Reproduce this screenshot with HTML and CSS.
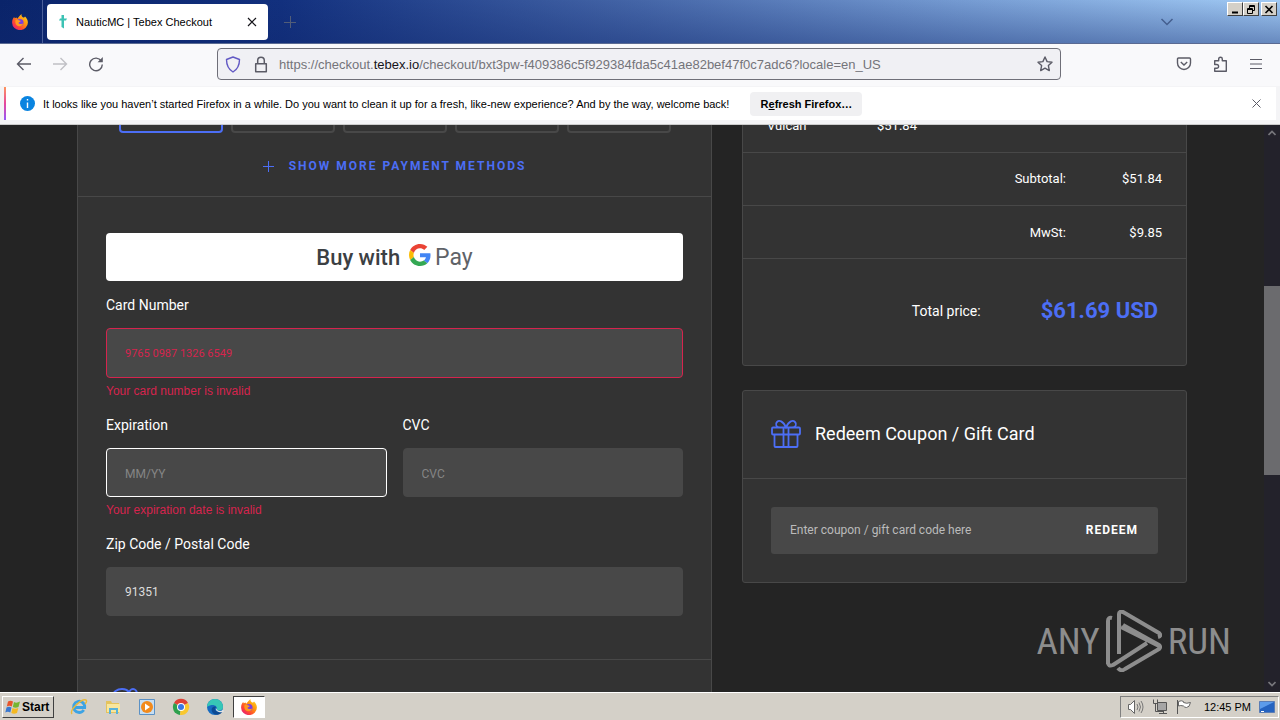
FILE: index.html
```html
<!DOCTYPE html>
<html lang="en">
<head>
  <meta charset="UTF-8">
  <meta name="viewport" content="width=device-width, initial-scale=1.0">
  <title>NauticMC | Tebex Checkout</title>
  <link rel="stylesheet" href="styles.css">
</head>
<body>
  <!-- Shared firefox logo, used in the tab strip and the taskbar -->
  <svg class="defs" aria-hidden="true">
    <defs>
      <linearGradient id="fox-body" x1="1" y1="0" x2="0.1" y2="1">
        <stop offset="0" stop-color="#ffe226"/>
        <stop offset="0.4" stop-color="#ff980e"/>
        <stop offset="0.7" stop-color="#ff4a30"/>
        <stop offset="1" stop-color="#e31587"/>
      </linearGradient>
      <symbol id="firefox" viewBox="0 0 16 16">
        <path fill="url(#fox-body)" d="M9.8 0c-.7 1.400-.2 2.300 1 3.300 1 .4 1.400.2 1.600 0l.6-.8c1.700 1.500 2.900 3.600 2.900 6a7.900 7.500 0 0 1-15.800.2C.1 6 1 4.300 2.200 3l.5 1.300L4.500 3.400l.8 1.300c1.300-1.500 2.500-3.500 4.500-4.700z"/>
        <circle cx="8" cy="8.600" r="3.500" fill="#7a3fe0"/>
        <path fill="#ff9a1f" d="M3.500 6.200c1-.9 2.400-.8 3.600.2 1 .2 1.700.2 1.800.7-.5 1-1.900 1-2.400 1.900.8 1.500 2.900 1.300 4.600.5-.6 2-2.400 3-4.300 2.700-2.600-.4-4-3-3.300-6z"/>
      </symbol>
    </defs>
  </svg>

  <header class="browser">
    <div class="tab-strip">
      <div class="pinned"><svg width="16" height="16"><use href="#firefox"/></svg></div>
      <div class="tab">
        <svg width="8" height="14" viewBox="0 0 8 14"><path d="M2.500 0l2.500-.0v3.500h3l-1 2H5v8l-2.500-1.500v-6.500H0l1-2h1.500z" fill="#3cc2b4"/></svg>
        <span>NauticMC | Tebex Checkout</span>
        <button class="icon-btn" aria-label="Close tab">
          <svg width="10" height="10" viewBox="0 0 10 10"><path d="M1 1l8 8M9 1l-8 8" stroke="#15141a" stroke-width="1.200" fill="none"/></svg>
        </button>
      </div>
      <button class="icon-btn" aria-label="New tab">
        <svg width="12" height="12" viewBox="0 0 12 12"><path d="M6.500 0v12M0 6.500h12" stroke="#525d78" fill="none"/></svg>
      </button>
      <button class="icon-btn list-tabs" aria-label="List all tabs">
        <svg width="14" height="8" viewBox="0 0 14 8"><path d="M1.500 1l5.500 5.500L12.500 1" stroke="#455f8e" stroke-width="1.500" fill="none"/></svg>
      </button>
      <div class="window-buttons">
        <button aria-label="Minimize"><svg width="10" height="9" viewBox="0 0 10 9"><path d="M2 7.500h6" stroke="#000" stroke-width="2"/></svg></button>
        <button aria-label="Restore"><svg width="10" height="9" viewBox="0 0 10 9"><path d="M3.500 3V.5h5v5H7M3.500 1.500h5M1.500 3.500h5v5h-5zM1.500 4.500h5" stroke="#000" fill="none"/></svg></button>
        <button class="close" aria-label="Close"><svg width="10" height="9" viewBox="0 0 10 9"><path d="M1.500 1l7 7M8.500 1l-7 7" stroke="#000" stroke-width="1.600"/></svg></button>
      </div>
    </div>

    <nav class="nav-bar">
      <div class="nav-buttons">
        <button class="icon-btn" aria-label="Back">
          <svg width="16" height="14" viewBox="0 0 16 14"><path d="M15 7H2M7.500 1L1.500 7l6 6" stroke="#5b5b66" stroke-width="1.400" fill="none"/></svg>
        </button>
        <button class="icon-btn" aria-label="Forward">
          <svg width="16" height="14" viewBox="0 0 16 14"><path d="M1 7h13M8.500 1l6 6-6 6" stroke="#c0c0c5" stroke-width="1.400" fill="none"/></svg>
        </button>
        <button class="icon-btn" aria-label="Reload">
          <svg width="16" height="16" viewBox="0 0 16 16"><path d="M13.300 5A6.300 6.300 0 1 0 14.300 8.500" stroke="#5b5b66" stroke-width="1.400" fill="none"/><path d="M14.800 1v5.200H9.600z" fill="#5b5b66"/></svg>
        </button>
      </div>
      <div class="url-bar">
        <svg width="16" height="17" viewBox="0 0 16 17"><path d="M8 1l6.500 2.500C14.500 9 13 13 8 16 3 13 1.500 9 1.500 3.500z" stroke="#6259c4" stroke-width="1.400" stroke-linejoin="round" fill="none"/></svg>
        <svg width="14" height="17" viewBox="0 0 14 17"><path d="M1.700 7.700h10.600v8H1.700zM3.700 7.500V4.500a3.300 3.300 0 0 1 6.600 0v3" stroke="#5b5b66" stroke-width="1.500" stroke-linejoin="round" fill="none"/></svg>
        <span class="url">https://checkout.<b>tebex.io</b>/checkout/bxt3pw-f409386c5f929384fda5c41ae82bef47f0c7adc6?locale=en_US</span>
        <button class="icon-btn" aria-label="Bookmark this page">
          <svg width="16" height="16" viewBox="0 0 16 16"><path d="M8 1l2.100 4.600 4.900.6-3.600 3.400.9 5L8 12.200l-4.300 2.400.9-5L1 6.200l4.900-.6z" stroke="#5b5b66" stroke-width="1.400" stroke-linejoin="round" fill="none"/></svg>
        </button>
      </div>
      <div class="nav-tools">
        <button class="icon-btn" aria-label="Save to Pocket">
          <svg width="16" height="14" viewBox="0 0 16 14"><path d="M2.500 1h11q1 0 1 1v4a6.500 6.500 0 0 1-13 0V2q0-1 1-1zM4.800 5L8 8l3.200-3" stroke="#5b5b66" stroke-width="1.400" fill="none"/></svg>
        </button>
        <button class="icon-btn" aria-label="Extensions">
          <svg width="16" height="16" viewBox="0 0 16 16"><path d="M1.700 8.500V4.700h4V3a1.800 1.800 0 0 1 3.600 0v1.700h4v10.600H1.700v-3h2a1.800 1.800 0 0 0 0-3.800z" stroke="#5b5b66" stroke-width="1.400" stroke-linejoin="round" fill="none"/></svg>
        </button>
        <button class="icon-btn" aria-label="Menu">
          <svg width="12" height="12" viewBox="0 0 12 12"><path d="M0 1.500h12M0 6h12M0 10.500h12" stroke="#5b5b66" fill="none"/></svg>
        </button>
      </div>
    </nav>

    <div class="notice">
      <svg width="15" height="15" viewBox="0 0 15 15"><circle cx="7.500" cy="7.500" r="7.500" fill="#0a84e0"/><path d="M7.500 6.500V12M7.500 3v1.600" stroke="#fff" stroke-width="1.400"/></svg>
      <span>It looks like you haven’t started Firefox in a while. Do you want to clean it up for a fresh, like-new experience? And by the way, welcome back!</span>
      <button class="refresh">R<u>e</u>fresh Firefox…</button>
      <button class="icon-btn" aria-label="Dismiss">
        <svg width="9" height="9" viewBox="0 0 9 9"><path d="M.5.5l8 8M8.500.5l-8 8" stroke="#5b5b66" fill="none"/></svg>
      </button>
    </div>
  </header>

  <div class="viewport">
    <main class="checkout">
      <section class="panel">
        <div class="methods">
          <div class="tiles">
            <button class="tile selected" aria-label="Payment method 1"></button>
            <button class="tile" aria-label="Payment method 2"></button>
            <button class="tile" aria-label="Payment method 3"></button>
            <button class="tile" aria-label="Payment method 4"></button>
            <button class="tile" aria-label="Payment method 5"></button>
          </div>
          <button class="show-more">
            <svg width="11" height="11" viewBox="0 0 11 11"><path d="M5.500 0v11M0 5.500h11" stroke="#4c6ef5"/></svg>
            Show more payment methods
          </button>
        </div>

        <form class="card-form">
          <button type="button" class="gpay">
            <span class="buy">Buy with</span>
            <svg width="22" height="22" viewBox="0 0 48 48">
              <path fill="#ea4335" d="M24 9.500c3.540 0 6.710 1.220 9.210 3.600l6.850-6.850C35.900 2.380 30.470 0 24 0 14.620 0 6.510 5.380 2.560 13.220l7.980 6.190C12.430 13.720 17.740 9.500 24 9.500z"/>
              <path fill="#4285f4" d="M46.980 24.550c0-1.570-.15-3.090-.38-4.550H24v9.020h12.940c-.58 2.960-2.260 5.480-4.780 7.180l7.730 6c4.510-4.180 7.090-10.360 7.090-17.650z"/>
              <path fill="#fbbc05" d="M10.530 28.590c-.48-1.450-.76-2.990-.76-4.590s.27-3.140.76-4.590l-7.980-6.190C.92 16.460 0 20.120 0 24c0 3.880.92 7.540 2.560 10.780z"/>
              <path fill="#34a853" d="M24 48c6.480 0 11.930-2.130 15.890-5.810l-7.730-6c-2.150 1.450-4.920 2.300-8.160 2.300-6.260 0-11.570-4.220-13.470-9.910l-7.980 6.190C6.510 42.620 14.620 48 24 48z"/>
            </svg>
            <span class="pay">Pay</span>
          </button>

          <div class="field">
            <label for="card">Card Number</label>
            <input id="card" class="invalid" type="text" value="9765 0987 1326 6549">
            <p class="error">Your card number is invalid</p>
          </div>
          <div class="field-row">
            <div class="field">
              <label for="expiration">Expiration</label>
              <input id="expiration" class="focused" type="text" placeholder="MM/YY">
              <p class="error">Your expiration date is invalid</p>
            </div>
            <div class="field">
              <label for="cvc">CVC</label>
              <input id="cvc" type="text" placeholder="CVC">
            </div>
          </div>
          <div class="field">
            <label for="zip">Zip Code / Postal Code</label>
            <input id="zip" type="text" value="91351">
          </div>
        </form>

        <div class="next-section">
          <svg width="32" height="30" viewBox="0 0 32 30"><path d="M1 8C1 4 5 1 10 1s8 3 8 8v18M17 6c0-3 2-5 4-5s4 2 4 5M1 10h28v18H1z" stroke="#4c6ef5" stroke-width="2" fill="none"/></svg>
        </div>
      </section>

      <aside class="side">
        <section class="panel summary">
          <table class="items">
            <tr><td>Vulcan</td><td>$51.84</td></tr>
          </table>
          <table class="totals">
            <tr><th scope="row">Subtotal:</th><td>$51.84</td></tr>
            <tr><th scope="row">MwSt:</th><td>$9.85</td></tr>
          </table>
          <div class="grand-total">
            <span>Total price:</span>
            <strong>$61.69 USD</strong>
          </div>
        </section>

        <section class="panel coupon">
          <h2>
            <svg width="30" height="30" viewBox="0 0 30 30"><path d="M2 8.500h26q1 0 1 1v5q0 1-1 1H2q-1 0-1-1v-5q0-1 1-1zM3.500 15.500V27q0 1 1 1h21q1 0 1-1V15.500M12.500 8.500V28M17.500 8.500V28M12.500 8.500H9C5 8.500 4 5 6 3s6-1.500 9 5.500C18 1.500 22 1 24 3s1 5.500-3 5.500" stroke="#4c6ef5" stroke-width="1.800" fill="none"/></svg>
            Redeem Coupon / Gift Card
          </h2>
          <form class="coupon-form">
            <div class="coupon-box">
              <input type="text" aria-label="Coupon code" placeholder="Enter coupon / gift card code here">
              <button type="button">Redeem</button>
            </div>
          </form>
        </section>
      </aside>
    </main>

    <div class="scrollbar">
      <svg width="8" height="6" viewBox="0 0 8 6"><path d="M.5 5L4 1.500 7.500 5" stroke="#77777c" stroke-width="1.600" fill="none"/></svg>
      <div class="track"><div class="thumb"></div></div>
      <svg width="8" height="6" viewBox="0 0 8 6"><path d="M.5 1L4 4.500 7.500 1" stroke="#77777c" stroke-width="1.600" fill="none"/></svg>
    </div>

    <div class="watermark">
      <span>ANY</span>
      <svg width="56" height="62" viewBox="0 0 56 62">
        <path d="M2 54V11q0-4 4-3M2 52q0 5 5 3L41 33M13 44V4q0-3 4-2l36 21q3 3-1 4M15 17l38 19M12 58q3 4 7 1l34-20q2-2 0-4L17 15" stroke="#8d8d8d" stroke-width="4" stroke-linejoin="round" fill="none"/>
      </svg>
      <span>RUN</span>
    </div>
  </div>

  <footer class="taskbar">
    <button class="start">
      <svg width="16" height="16" viewBox="0 0 16 16">
        <path d="M3 2.500q2.500-1.500 5 0L6.800 7.500q-2.500-1.500-5 0z" fill="#e8552b"/>
        <path d="M9 3q2.500 1.500 6-.5L13.500 8q-3 1.500-5.700 0z" fill="#76b531"/>
        <path d="M1.500 8.500q2.500-1.500 5 0L5.300 13.500q-2.500-1.500-5 0z" fill="#3a78d0"/>
        <path d="M7.500 9q2.500 1.500 5.800 0L12 14q-3 1.500-5.700 0z" fill="#f5b921"/>
      </svg>
      Start
    </button>
    <div class="launchers">
      <button aria-label="Internet Explorer">
        <svg width="18" height="18" viewBox="0 0 18 18"><path d="M13.800 12A5.600 5.600 0 1 1 14.700 9.500H5" stroke="#3ca3e4" stroke-width="2.800" fill="none"/><path d="M2 16C-1 12 12 0 16 2c1 1 0 3-1 4" stroke="#e9b93a" stroke-width="1.400" fill="none"/></svg>
      </button>
      <button aria-label="Explorer">
        <svg width="18" height="18" viewBox="0 0 18 18"><path d="M2 3h5l1 2h7v10H2z" fill="#e4c35d"/><path d="M3 6h13v8H3z" fill="#f8e69d"/><path d="M5 16v-6h9v6h-2v-4H7v4z" fill="#58b2da"/></svg>
      </button>
      <button aria-label="Media Player">
        <svg width="18" height="18" viewBox="0 0 18 18"><path d="M1.500 1.500h15v15h-15z" fill="#c7def2" stroke="#5b91c5"/><circle cx="9" cy="9" r="6" fill="#f28a1c"/><path d="M7 5.500l5 3.500-5 3.500z" fill="#fff"/></svg>
      </button>
      <button aria-label="Chrome">
        <svg width="18" height="18" viewBox="0 0 18 18"><path d="M9 9L2 5a8 8 0 0 1 14 0z" fill="#dd4236"/><path d="M9 9l-1 8A8 8 0 0 1 2 5z" fill="#2da04d"/><path d="M9 9l7-4a8 8 0 0 1-8 12z" fill="#f9c82f"/><circle cx="9" cy="9" r="4" fill="#fff"/><circle cx="9" cy="9" r="3" fill="#3978e4"/></svg>
      </button>
      <button aria-label="Edge">
        <svg width="18" height="18" viewBox="0 0 18 18"><circle cx="9" cy="9" r="8" fill="#176bc0"/><path d="M1 9a8 8 0 0 1 16 0c0 3-3 4-6 3 1-4-4-7-10-3z" fill="#37c7b6"/><path d="M17 13c-3 2-8 1-8-2 0-1 1-2 1-2-3-2-7 3-2 7 4 2 7 0 9-3z" fill="#0c4a93"/><path d="M10 10c1 3 4 4 7 2l1 1-1 1c-4 1-8-1-7-4z" fill="#e0e4e6"/></svg>
      </button>
      <button class="active" aria-label="Firefox"><svg width="16" height="16"><use href="#firefox"/></svg></button>
    </div>
    <div class="tray">
      <svg width="17" height="16" viewBox="0 0 17 16"><path d="M1.500 5.500h2l4-4v13l-4-4h-2z" fill="#fff" stroke="#666"/><path d="M10 5q2 3 0 6M12 3.500q3 4.500 0 9M14 2q4 6 0 12" stroke="#777" fill="none"/></svg>
      <svg width="16" height="16" viewBox="0 0 16 16"><path d="M5.500 3.500h9v8h-9z" fill="#a5a5a5" stroke="#555"/><path d="M1.500.5v4h4v-4M3.500 4.500v8h8M7 14.500h8M11.500 12v2" fill="none" stroke="#555"/></svg>
      <svg width="16" height="16" viewBox="0 0 16 16"><path d="M2.500 2.500q3-1.500 5 0v1q3 1.500 7 0-1 5-4 5-2 0-3-1.500-3-1-5 0z" fill="#fff" stroke="#666"/><path d="M1.500 1v14" stroke="#555"/></svg>
      <time>12:45 PM</time>
      <svg width="16" height="14" viewBox="0 0 16 14"><path d="M.5 1.500h15v11H.5z" fill="#2563c0" stroke="#5a7db5"/><path d="M1 2h14L1 9z" fill="#5c9bea"/><path d="M2 11.500h3" stroke="#fff"/></svg>
    </div>
  </footer>
</body>
</html>
```
FILE: styles.css
```css
* {
  box-sizing: border-box;
}
body {
  margin: 0;
  height: 100vh;
  display: flex;
  flex-direction: column;
  overflow: hidden;
  font-family: Tahoma, "Liberation Sans", sans-serif;
  font-size: 11px;
  color: #000;
}
button {
  margin: 0;
  padding: 0;
  border: 0;
  background: none;
  font: inherit;
  color: inherit;
}
svg {
  display: block;
  flex: none;
}
.defs {
  position: absolute;
  width: 0;
  height: 0;
}

/* Browser chrome */
.browser {
  background: #f4f4f6;
  border-bottom: 1px solid #ccc;
}
.tab-strip {
  display: flex;
  align-items: center;
  height: 44px;
  border-bottom: 1px solid #5a6a92;
  background:
    linear-gradient(to bottom, rgba(16, 40, 110, 0), rgba(16, 40, 110, 0.4)),
    linear-gradient(to right, #0a246a, #12307e 22%, #4566a8 50%, #759bd2 75%, #a2cbf5);
}
.pinned {
  display: flex;
  align-items: center;
  justify-content: center;
  width: 43px;
  height: 100%;
  padding-right: 3px;
  border-right: 1px solid #4a5f9a;
}
.tab {
  display: flex;
  align-items: center;
  width: 221px;
  height: 36px;
  margin-left: 4px;
  margin-right: 16px;
  padding: 0 11px 0 12px;
  border-radius: 4px;
  background: #fff;
}
.tab span {
  flex: 1;
  margin-left: 9px;
}
.list-tabs {
  margin-left: auto;
  margin-right: 53px;
}
.window-buttons {
  display: flex;
  align-self: flex-start;
  margin: 2px 3px 0 0;
}
.window-buttons button {
  display: flex;
  align-items: center;
  justify-content: center;
  width: 16px;
  height: 14px;
  background: #d4d0c8;
  border: 1px solid #fff;
  border-right-color: #404040;
  border-bottom-color: #404040;
}
.window-buttons .close {
  margin-left: 2px;
}
.nav-bar {
  display: flex;
  align-items: center;
  height: 42px;
  padding: 0 18px 2px 16px;
  background: #f9f9fb;
}
.nav-buttons {
  display: flex;
  align-items: center;
  gap: 20px;
  flex: 1;
}
.url-bar {
  display: flex;
  align-items: center;
  gap: 13px;
  flex: 0 1 844px;
  height: 32px;
  padding: 0 7px;
  border: 1px solid #6f6f78;
  border-radius: 4px;
  background: #f0f0f4;
}
.url {
  flex: 1;
  margin-left: -2px;
  font-size: 13px;
  color: #74747a;
  white-space: nowrap;
}
.url b {
  font-weight: normal;
  color: #15141a;
}
.nav-tools {
  display: flex;
  align-items: center;
  justify-content: flex-end;
  gap: 21px;
  flex: 1;
}
.notice {
  display: flex;
  align-items: center;
  height: 33px;
  margin: 1px 4px 4px;
  padding: 0 15px 0 14px;
  border-left: 2px solid;
  border-image: linear-gradient(#ff9a5a, #e6479c, #9059ff) 1;
  background: #fff;
}
.notice span {
  margin: 0 21px 0 8px;
  white-space: nowrap;
}
.notice .icon-btn {
  margin-left: auto;
}
.refresh {
  width: 112px;
  height: 24px;
  border-radius: 4px;
  background: #f0f0f2;
  font-weight: bold;
}

/* Checkout page */
.viewport {
  position: relative;
  display: flex;
  flex: 1;
  min-height: 0;
  overflow: hidden;
  background: #242424;
  font-family: Roboto, sans-serif;
  font-size: 14px;
  color: #fff;
}
.checkout {
  display: grid;
  grid-template-columns: 635fr 445fr;
  gap: 30px;
  flex: 1;
  max-width: 1110px;
  margin: -60px auto 0;
}
.panel {
  border: 1px solid #484848;
  border-radius: 3px;
  background: #333;
}
.methods {
  display: flex;
  flex-direction: column;
  align-items: center;
  gap: 23px;
  padding: 19px 28px 20px;
  border-bottom: 1px solid #484848;
}
.tiles {
  display: grid;
  grid-template-columns: repeat(5, 104px);
  gap: 8px;
}
.tile {
  height: 48px;
  border: 2px solid #484848;
  border-radius: 4px;
}
.tile.selected {
  border-color: #4c6ef5;
}
.show-more {
  display: flex;
  align-items: center;
  gap: 15px;
  height: 20px;
  font-size: 12px;
  font-weight: bold;
  letter-spacing: 2px;
  text-transform: uppercase;
  color: #4c6ef5;
}
.card-form {
  padding: 36px 28px 43px;
  border-bottom: 1px solid #484848;
}
.gpay {
  display: flex;
  align-items: center;
  justify-content: center;
  width: 100%;
  height: 48px;
  margin-bottom: 14px;
  border-radius: 4px;
  background: #fff;
}
.gpay svg {
  margin: 0 4px 4px 9px;
}
.buy {
  font-size: 22px;
  font-weight: 500;
  color: #3c4043;
}
.pay {
  font-size: 23px;
  color: #5f6368;
}
.field {
  display: flex;
  flex-direction: column;
  flex: 1;
}
.field label {
  margin-bottom: 13px;
  line-height: 20px;
}
.field input {
  width: 100%;
  height: 49px;
  padding: 0 18px;
  border: 1px solid #484848;
  border-radius: 4px;
  background: #484848;
  font: 12px Roboto, sans-serif;
  color: #ddd;
}
.field input::placeholder {
  color: #858585;
}
.field .invalid {
  height: 50px;
  border-color: #d6244e;
  font-size: 11px;
  color: #d6244e;
}
.field .focused {
  border-color: #fff;
}
.error {
  margin: 5px 0 0;
  line-height: 16px;
  font-family: Tahoma, "Liberation Sans", sans-serif;
  font-size: 12px;
  color: #d6244e;
}
.field-row {
  display: flex;
  gap: 16px;
  margin: 16px 0;
}
.field-row input {
  padding-top: 2px;
}
.next-section {
  padding: 28px 34px;
}
.side {
  display: flex;
  flex-direction: column;
  gap: 24px;
}
.summary {
  padding-top: 33px;
  font-size: 13px;
}
.summary table {
  width: 100%;
  border-collapse: collapse;
}
.summary tr {
  height: 53px;
  border-bottom: 1px solid #484848;
}
.summary td,
.summary th {
  padding: 0 24px;
  font-weight: normal;
}
.items td:first-child {
  width: 110px;
  padding-right: 0;
}
.totals td,
.totals th {
  text-align: right;
}
.totals td {
  width: 120px;
}
.totals th {
  padding-right: 0;
}
.grand-total {
  display: flex;
  align-items: center;
  justify-content: flex-end;
  gap: 60px;
  height: 106px;
  padding: 0 28px 3px;
  font-size: 14px;
}
.grand-total strong {
  font-size: 22px;
  color: #4c6ef5;
}
.coupon h2 {
  display: flex;
  align-items: center;
  gap: 14px;
  height: 88px;
  margin: 0;
  padding: 0 28px 2px;
  border-bottom: 1px solid #484848;
  font-size: 18px;
  font-weight: normal;
}
.coupon-form {
  padding: 28px;
}
.coupon-box {
  display: flex;
  height: 47px;
  padding: 0 20px 2px 19px;
  border-radius: 3px;
  background: #484848;
}
.coupon-box input {
  flex: 1;
  min-width: 0;
  padding: 0;
  border: 0;
  background: none;
  font: 12px Roboto, sans-serif;
  color: #fff;
}
.coupon-box input::placeholder {
  color: #bbb;
}
.coupon-box button {
  font-size: 12px;
  font-weight: bold;
  letter-spacing: 1px;
  text-transform: uppercase;
}
.scrollbar {
  display: flex;
  flex-direction: column;
  align-items: center;
  width: 16px;
  padding: 5px 0;
  background: #23222b;
}
.track {
  flex: 1;
  width: 100%;
  padding-top: 150px;
}
.thumb {
  height: 189px;
  background: #6b6b6e;
}
.watermark {
  position: absolute;
  right: 49px;
  bottom: 20px;
  display: flex;
  align-items: center;
  gap: 6px;
  font-family: "Liberation Sans Narrow", "Roboto Condensed", Roboto, sans-serif;
  font-size: 37px;
  color: #8d8d8d;
}

/* Taskbar */
.taskbar {
  display: flex;
  align-items: center;
  height: 28px;
  padding: 0 1px 0 2px;
  border-top: 1px solid #fff;
  background: #d4d0c8;
}
.start {
  display: flex;
  align-items: center;
  gap: 1px;
  width: 52px;
  height: 22px;
  padding-left: 2px;
  border: 1px solid #fff;
  border-right-color: #404040;
  border-bottom-color: #404040;
  font-size: 12px;
  font-weight: bold;
}
.launchers {
  display: flex;
  gap: 2px;
  margin-left: 9px;
}
.launchers button {
  display: flex;
  align-items: center;
  justify-content: center;
  width: 32px;
  height: 22px;
}
.launchers .active {
  background: #fff;
  border: 1px solid #404040;
  border-right-color: #fff;
  border-bottom-color: #fff;
}
.tray {
  display: flex;
  align-items: center;
  gap: 8px;
  height: 22px;
  margin-left: auto;
  padding: 0 3px 0 6px;
  border: 1px solid #808080;
  border-right-color: #fff;
  border-bottom-color: #fff;
}
.tray time {
  margin-left: 4px;
}
```
